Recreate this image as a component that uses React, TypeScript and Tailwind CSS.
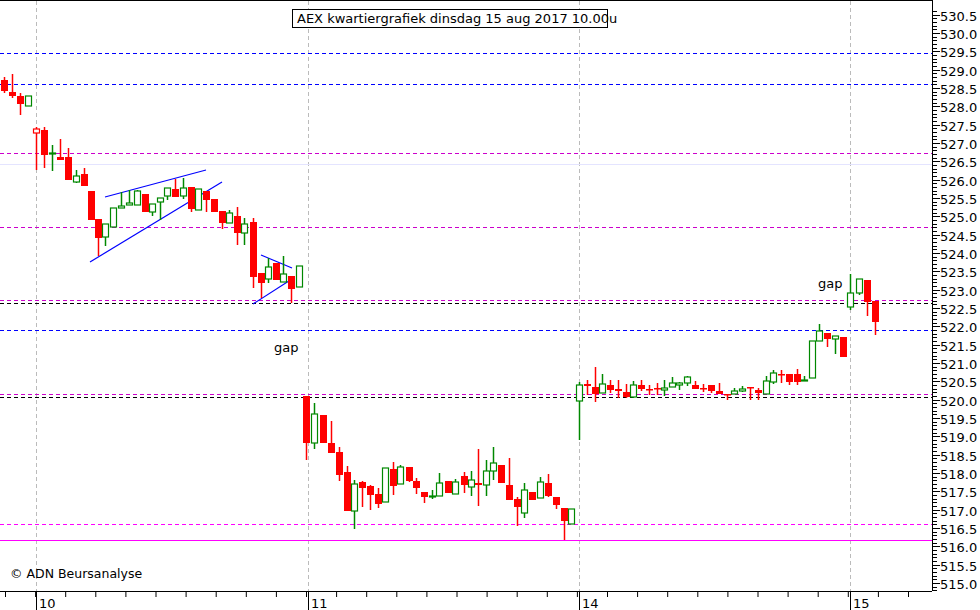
import React from "react";

type C = [number, number, number, number, number, string];
const candles: C[] = [
  [4,80,91,77,93,"r"],[12,92,96,74,98,"r"],[20,96,104,93,115,"r"],[28,96,106,96,106,"g"],
  [36,129,133,127,170,"o"],[44,130,155,127,168,"r"],[52,153,153,145,171,"g"],[60,157,160,139,160,"r"],
  [68,157,180,148,180,"r"],[76,176,182,170,183,"g"],[84,174,186,168,186,"r"],[91,191,220,191,220,"r"],
  [98,219,238,219,256,"r"],[105,224,237,224,246,"g"],[113,208,227,208,227,"g"],[121,206,208,192,208,"g"],
  [129,203,205,190,205,"g"],[137,191,205,190,205,"g"],[145,194,212,194,212,"r"],[152,204,212,204,216,"g"],
  [160,198,202,198,220,"g"],[167,188,196,188,200,"g"],[175,189,197,179,197,"r"],[183,188,196,178,199,"g"],
  [191,187,209,187,212,"r"],[198,189,210,189,210,"g"],[206,191,200,191,212,"r"],[214,199,212,199,212,"r"],
  [222,211,223,211,229,"r"],[229,213,223,210,223,"g"],[237,216,233,207,245,"r"],[244,224,233,218,245,"g"],
  [253,222,277,218,288,"r"],[261,273,283,273,298,"r"],[268,267,279,258,283,"g"],[276,263,280,263,280,"r"],
  [283,274,282,256,282,"g"],[291,276,289,276,303,"r"],[299,266,287,266,287,"g"],
  [306,396,443,396,460,"r"],[314,414,443,403,449,"g"],[323,415,443,415,443,"r"],[331,443,453,421,453,"r"],
  [339,452,475,447,481,"r"],[347,472,511,466,511,"r"],[354,484,511,480,529,"g"],[362,482,488,481,507,"r"],
  [370,486,495,485,510,"r"],[378,494,504,488,508,"r"],[385,468,502,468,502,"g"],[393,469,486,462,495,"r"],
  [400,467,484,465,484,"g"],[409,467,481,467,482,"r"],[416,481,488,478,494,"r"],[424,492,497,492,503,"r"],
  [432,496,497,490,499,"g"],[439,483,496,473,496,"g"],[448,481,493,481,493,"r"],[455,482,494,479,494,"g"],
  [464,476,485,472,493,"r"],[471,480,487,471,496,"g"],[478,483,485,449,506,"r"],[486,471,485,460,496,"g"],
  [493,463,471,447,480,"g"],[501,465,483,465,483,"r"],[509,485,500,458,500,"r"],[517,499,507,497,526,"r"],
  [524,490,513,483,518,"g"],[532,492,500,492,500,"r"],[540,482,498,477,498,"g"],[548,483,496,474,497,"r"],
  [556,497,505,497,509,"r"],[564,508,521,508,540,"r"],[571,509,524,509,524,"g"],
  [579,385,401,382,440,"g"],[587,384,386,380,395,"r"],[595,387,394,367,402,"r"],[602,384,393,374,393,"g"],
  [610,385,390,380,393,"r"],[618,389,391,380,398,"r"],[626,392,397,384,398,"r"],[633,385,397,381,398,"g"],
  [641,385,389,380,391,"r"],[649,389,389,385,395,"r"],[657,388,388,383,395,"r"],[664,388,390,380,396,"g"],
  [672,383,387,377,387,"g"],[679,383,385,382,390,"g"],[687,377,383,376,386,"g"],[695,385,389,381,389,"r"],
  [703,388,388,384,392,"r"],[711,385,391,385,393,"r"],[719,391,394,383,394,"r"],[727,394,394,394,400,"r"],
  [734,391,394,388,394,"g"],[742,389,391,386,392,"g"],[750,387,387,387,400,"r"],[758,390,393,388,400,"r"],
  [766,381,394,376,394,"g"],[773,373,382,370,384,"g"],[781,374,375,370,383,"r"],[789,374,382,374,385,"r"],
  [797,374,382,369,385,"r"],[804,380,381,376,381,"g"],[812,341,378,341,378,"g"],[819,331,341,324,341,"g"],
  [827,333,339,333,347,"r"],[835,336,339,336,354,"g"],[843,337,357,337,357,"r"],
  [850,293,307,274,310,"g"],[859,279,293,279,295,"g"],[867,280,302,280,316,"r"],[875,301,322,301,335,"r"],
];

const hl: [number, string][] = [
  [53,"#0000ff"],[84,"#0000ff"],[153,"#cc00cc"],[227,"#cc00cc"],[300,"#cc00cc"],[303,"#000000"],
  [330,"#0000ff"],[394,"#cc00cc"],[397,"#000000"],[524,"#ff00ff"],
];

const yOf = (p: number) => 33 + (530 - p) * 36.67;

export default function App() {
  const labels: number[] = [];
  for (let p = 515; p <= 530.51; p += 0.5) labels.push(Math.round(p * 10) / 10);
  const minor: number[] = [];
  for (let i = 0; i <= 160; i++) minor.push(514.6 + i * 0.1);
  const ticks: number[] = [];
  for (let x = 5; x < 932; x += 30.1) ticks.push(x);
  return (
    <div className="w-[980px] h-[610px] bg-white overflow-hidden">
      <svg width="980" height="610" className="block" style={{ fontFamily: "'DejaVu Sans', Verdana, sans-serif" }}>
        <line x1="0" y1="0.5" x2="932" y2="0.5" stroke="#000" />
        {[36, 308, 579, 850].map((x) => (
          <line key={x} x1={x + 0.5} y1="1" x2={x + 0.5} y2="591" stroke="#bbb" strokeDasharray="4 3" />
        ))}
        <line x1="0" y1="164.5" x2="932" y2="164.5" stroke="#e4e4ff" />
        {hl.map(([y, c], i) => (
          <line key={i} x1="0" y1={y + 0.5} x2="932" y2={y + 0.5} stroke={c} strokeDasharray="4 3" />
        ))}
        <line x1="0" y1="540.5" x2="932" y2="540.5" stroke="#ff00ff" />
        <g stroke="#0000ff" strokeWidth="1.2">
          <line x1="90" y1="262" x2="222" y2="182" />
          <line x1="105" y1="197" x2="206" y2="170" />
          <line x1="261" y1="255" x2="292" y2="268" />
          <line x1="253" y1="304" x2="292" y2="279" />
        </g>
        {candles.map(([x, t, b, wt, wb, c], i) => {
          const col = c === "g" ? "#008800" : "#ff0000";
          const cx = x + 0.5;
          return (
            <g key={i}>
              <line x1={cx} y1={wt} x2={cx} y2={wb} stroke={col} strokeWidth="1.5" />
              {c === "r" ? (
                <rect x={x - 3} y={t} width="7" height={Math.max(b - t, 1.5)} fill={col} />
              ) : (
                <rect x={x - 2.5} y={t} width="6" height={Math.max(b - t, 1)} fill="#fff" stroke={c === "o" ? "#ff0000" : col} strokeWidth="1.2" />
              )}
            </g>
          );
        })}
        <text x="274" y="352" fontSize="13" fill="#000">gap</text>
        <text x="818" y="288" fontSize="13" fill="#000">gap</text>
        <rect x="292.5" y="9.5" width="315" height="18" fill="#fff" stroke="#000" />
        <text x="297" y="23" fontSize="13" fill="#000">AEX kwartiergrafiek dinsdag 15 aug 2017 10.00u</text>
        <text x="10" y="605" fontSize="12.5" fill="#000" dy="-27">© ADN Beursanalyse</text>
        <line x1="0" y1="591.5" x2="932" y2="591.5" stroke="#000" />
        {ticks.map((x, i) => (
          <line key={i} x1={x + 0.5} y1="591" x2={x + 0.5} y2="597" stroke="#000" />
        ))}
        {[[36, "10"], [308, "11"], [579, "14"], [850, "15"]].map(([x, t]) => (
          <g key={t as string}>
            <line x1={(x as number) + 0.5} y1="591" x2={(x as number) + 0.5} y2="610" stroke="#000" />
            <text x={(x as number) + 3} y="608" fontSize="13" fill="#000">{t}</text>
          </g>
        ))}
        <line x1="932.5" y1="0" x2="932.5" y2="591" stroke="#000" />
        {minor.map((p, i) => {
          const y = Math.round(yOf(p)) + 0.5;
          if (y < 0 || y > 591) return null;
          return <line key={i} x1="932" x2="937" y1={y} y2={y} stroke="#000" />;
        })}
        {labels.map((p) => {
          const y = Math.round(yOf(p)) + 0.5;
          return (
            <g key={p}>
              <line x1="932" x2="940" y1={y} y2={y} stroke="#000" />
              <text x="940" y={y + 5} fontSize="13" fill="#000">{p.toFixed(1)}</text>
            </g>
          );
        })}
      </svg>
    </div>
  );
}
